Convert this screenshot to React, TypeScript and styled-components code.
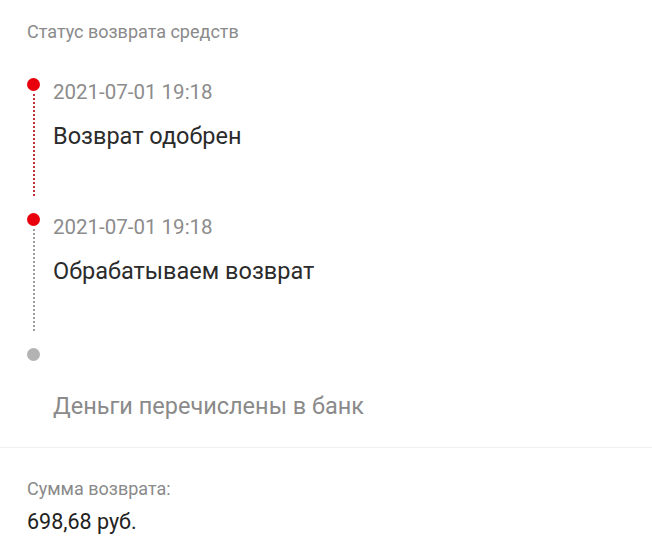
import React from 'react'
import styled, { createGlobalStyle } from 'styled-components'

const GlobalStyle = createGlobalStyle`
  html, body {
    margin: 0;
    padding: 0;
    background: #ffffff;
  }
  body {
    font-family: Roboto, 'Noto Sans', 'Liberation Sans', sans-serif;
  }
`

const Page = styled.div`
  width: 652px;
  background: #ffffff;
`

const StatusSection = styled.div`
  padding: 20px 27px 26px;
  border-bottom: 1px solid #f0f0f0;
`

const SectionTitle = styled.div`
  font-size: 18px;
  line-height: 24px;
  color: #8a8a8a;
`

const Timeline = styled.div`
  margin-top: 34px;
  display: flex;
  flex-direction: column;
`

const Step = styled.div<{ $last?: boolean }>`
  display: flex;
  flex-flow: row nowrap;
  height: ${(p) => (p.$last ? 'auto' : '135px')};
`

const Rail = styled.div`
  width: 13px;
  display: flex;
  flex-direction: column;
  align-items: center;
  flex-shrink: 0;
`

const Dot = styled.div<{ $active: boolean }>`
  width: 13px;
  height: 13px;
  border-radius: 50%;
  background: ${(p) => (p.$active ? '#e8000d' : '#b3b3b3')};
`

const Line = styled.div<{ $active: boolean }>`
  flex: 1;
  width: 2px;
  margin: 3px 0 15px;
  background: repeating-linear-gradient(
    to bottom,
    ${(p) => (p.$active ? '#c03038' : '#9e9e9e')} 0 2px,
    transparent 2px 4px
  );
`

const Content = styled.div`
  margin-left: 13px;
  padding-top: 2px;
  display: flex;
  flex-direction: column;
`

const DateText = styled.div`
  font-size: 20.5px;
  line-height: 24px;
  height: 24px;
  color: #8c8c8c;
`

const StepTitle = styled.div<{ $muted: boolean }>`
  margin-top: 17px;
  font-size: 23.5px;
  line-height: 30px;
  color: ${(p) => (p.$muted ? '#8a8a8a' : '#2b2b2b')};
`

const SumSection = styled.div`
  padding: 29px 27px 10px;
`

const SumLabel = styled.div`
  font-size: 18px;
  line-height: 24px;
  color: #8a8a8a;
`

const SumValue = styled.div`
  margin-top: 7px;
  font-size: 21.5px;
  line-height: 28px;
  color: #222222;
`

const steps = [
  { id: '0', date: '2021-07-01 19:18', title: 'Возврат одобрен', done: true },
  { id: '1', date: '2021-07-01 19:18', title: 'Обрабатываем возврат', done: true },
  { id: '2', date: '', title: 'Деньги перечислены в банк', done: false },
]

const App: React.FC = () => {
  return (
    <Page>
      <GlobalStyle />
      <StatusSection>
        <SectionTitle>Статус возврата средств</SectionTitle>
        <Timeline>
          {steps.map((step, i) => {
            const last = i === steps.length - 1
            return (
              <Step key={step.id} $last={last}>
                <Rail>
                  <Dot $active={step.done} />
                  {!last && <Line $active={i === 0} />}
                </Rail>
                <Content>
                  <DateText>{step.date}</DateText>
                  <StepTitle $muted={!step.done}>{step.title}</StepTitle>
                </Content>
              </Step>
            )
          })}
        </Timeline>
      </StatusSection>
      <SumSection>
        <SumLabel>Сумма возврата:</SumLabel>
        <SumValue>698,68 руб.</SumValue>
      </SumSection>
    </Page>
  )
}

export default App
